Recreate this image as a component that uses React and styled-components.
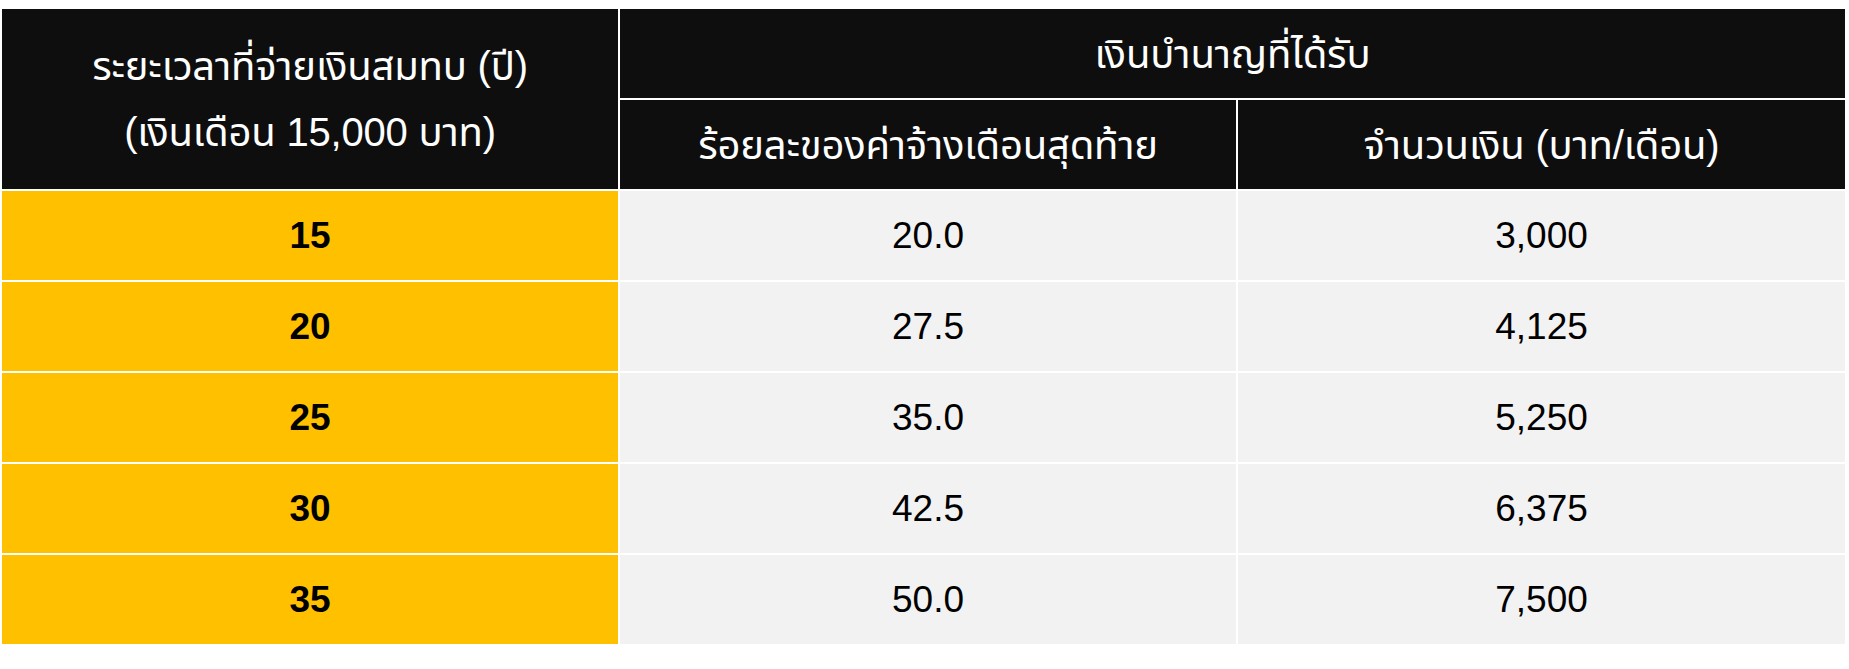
import React from "react";
import styled, { createGlobalStyle } from "styled-components";

const Global = createGlobalStyle`
  html, body { margin: 0; padding: 0; background: #ffffff; }
  body { font-family: "Liberation Sans", "Noto Sans Thai", "Noto Sans", sans-serif; }
`;

const Page = styled.div`
  padding: 9px 4px 0 2px;
`;

const Grid = styled.div`
  display: grid;
  grid-template-columns: 616px 616px 607px;
  grid-auto-rows: 89px;
  gap: 2px;
  background: #ffffff;
`;

const HeadCell = styled.div`
  background: #0e0e0e;
  color: #ffffff;
  display: flex;
  align-items: center;
  justify-content: center;
  text-align: center;
  font-size: 40px;
  line-height: 66px;
  font-weight: 400;
  letter-spacing: -0.2px;
  grid-row: ${(p) => (p.$rowSpan ? `span ${p.$rowSpan}` : "auto")};
  grid-column: ${(p) => (p.$colSpan ? `span ${p.$colSpan}` : "auto")};
`;

const YearCell = styled.div`
  background: #ffc000;
  color: #000000;
  display: flex;
  align-items: center;
  justify-content: center;
  font-size: 37px;
  font-weight: 700;
`;

const ValueCell = styled.div`
  background: #f2f2f2;
  color: #000000;
  display: flex;
  align-items: center;
  justify-content: center;
  font-size: 37px;
  font-weight: 400;
`;

const rows = [
  ["15", "20.0", "3,000"],
  ["20", "27.5", "4,125"],
  ["25", "35.0", "5,250"],
  ["30", "42.5", "6,375"],
  ["35", "50.0", "7,500"],
];

export default function App() {
  return (
    <>
      <Global />
      <Page>
        <Grid>
          <HeadCell $rowSpan={2}>
            ระยะเวลาที่จ่ายเงินสมทบ (ปี)
            <br />
            (เงินเดือน 15,000 บาท)
          </HeadCell>
          <HeadCell $colSpan={2}>เงินบำนาญที่ได้รับ</HeadCell>
          <HeadCell>ร้อยละของค่าจ้างเดือนสุดท้าย</HeadCell>
          <HeadCell>จำนวนเงิน (บาท/เดือน)</HeadCell>
          {rows.map(([y, p, a]) => (
            <React.Fragment key={y}>
              <YearCell>{y}</YearCell>
              <ValueCell>{p}</ValueCell>
              <ValueCell>{a}</ValueCell>
            </React.Fragment>
          ))}
        </Grid>
      </Page>
    </>
  );
}
